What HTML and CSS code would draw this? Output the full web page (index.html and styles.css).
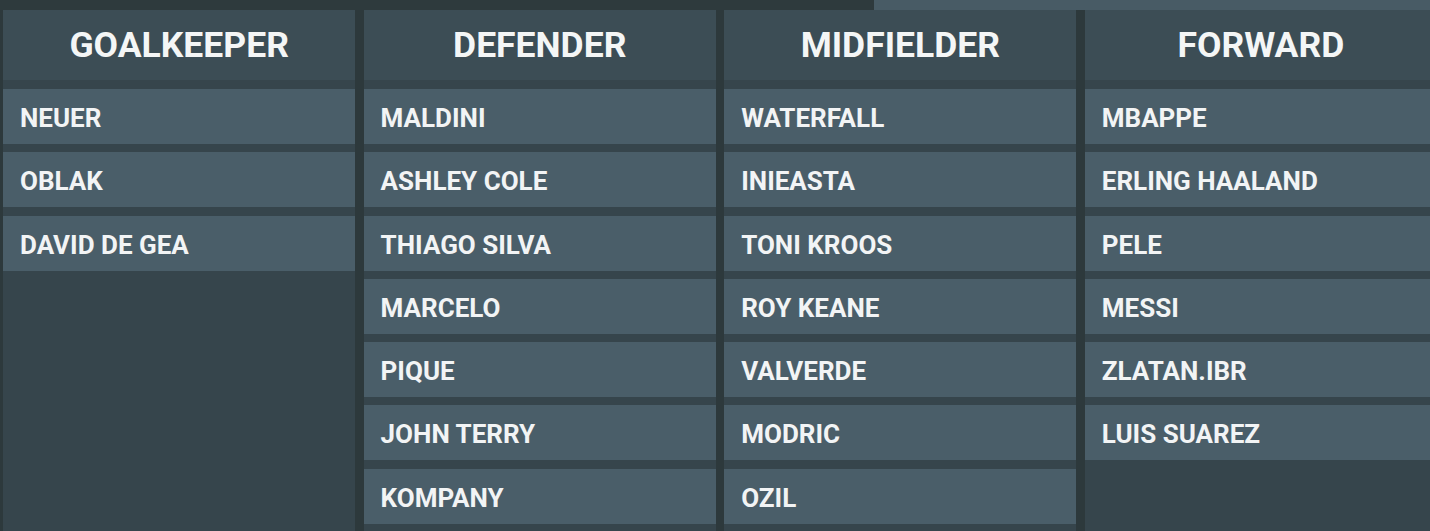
FILE: index.html
```html
<!DOCTYPE html>
<html>
<head>
<meta charset="utf-8">
<link rel="stylesheet" href="styles.css">
</head>
<body>
<div class="topbar"><div class="topbar-fill"></div><div class="topbar-tab"></div></div>
<div class="board">
  <div class="col">
    <div class="head">GOALKEEPER</div>
    <div class="row">NEUER</div>
    <div class="row">OBLAK</div>
    <div class="row">DAVID DE GEA</div>
  </div>
  <div class="col">
    <div class="head">DEFENDER</div>
    <div class="row">MALDINI</div>
    <div class="row">ASHLEY COLE</div>
    <div class="row">THIAGO SILVA</div>
    <div class="row">MARCELO</div>
    <div class="row">PIQUE</div>
    <div class="row">JOHN TERRY</div>
    <div class="row">KOMPANY</div>
  </div>
  <div class="col">
    <div class="head">MIDFIELDER</div>
    <div class="row">WATERFALL</div>
    <div class="row">INIEASTA</div>
    <div class="row">TONI KROOS</div>
    <div class="row">ROY KEANE</div>
    <div class="row">VALVERDE</div>
    <div class="row">MODRIC</div>
    <div class="row">OZIL</div>
  </div>
  <div class="col">
    <div class="head">FORWARD</div>
    <div class="row">MBAPPE</div>
    <div class="row">ERLING HAALAND</div>
    <div class="row">PELE</div>
    <div class="row">MESSI</div>
    <div class="row">ZLATAN.IBR</div>
    <div class="row">LUIS SUAREZ</div>
  </div>
</div>
</body>
</html>
```
FILE: styles.css
```css
html, body {
  margin: 0;
  padding: 0;
  height: 531px;
  overflow: hidden;
  background: #2d393c;
  font-family: Roboto, "Liberation Sans", sans-serif;
}
.topbar {
  display: flex;
  height: 10px;
}
.topbar-fill {
  width: 874px;
  background: #2e3a3d;
}
.topbar-tab {
  flex: 1;
  background: #485b65;
}
.board {
  display: flex;
  gap: 8.3px;
  padding-left: 3px;
  height: 521px;
}
.col {
  flex: 0 0 352.3px;
  display: flex;
  flex-direction: column;
  gap: 8.3px;
  background: #36454c;
}
.head {
  height: 70px;
  margin-bottom: 0.7px;
  display: flex;
  align-items: center;
  justify-content: center;
  background: #3c4d55;
  color: #f4f6f6;
  font-weight: 700;
  font-size: 35.5px;
}
.row {
  height: 55px;
  box-sizing: border-box;
  padding-top: 3px;
  display: flex;
  align-items: center;
  padding-left: 17px;
  background: #4a5e69;
  color: #f2f4f5;
  font-weight: 700;
  font-size: 26px;
}
```
